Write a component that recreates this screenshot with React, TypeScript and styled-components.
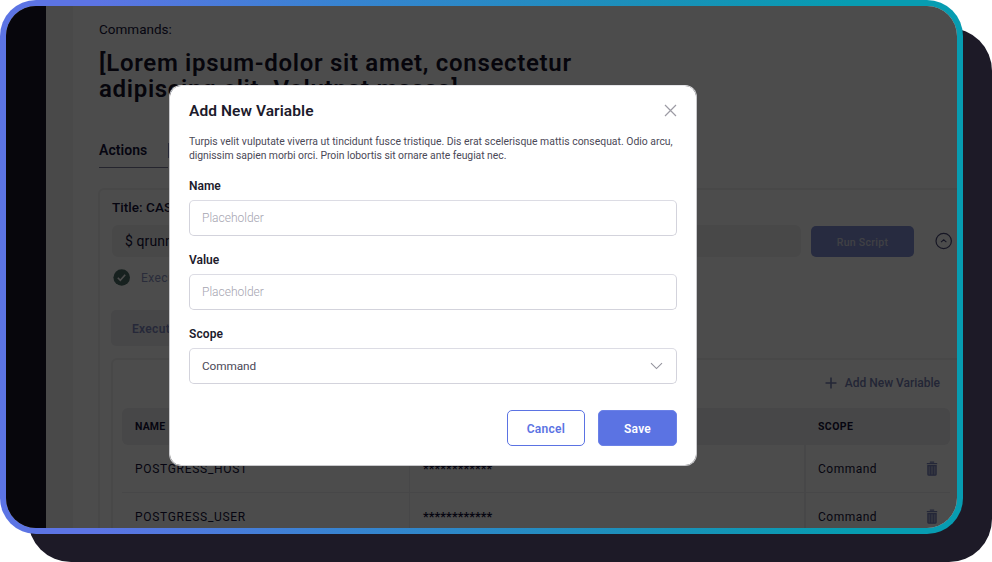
import React from 'react';
import styled, { createGlobalStyle } from 'styled-components';

const GlobalStyle = createGlobalStyle`
  * { box-sizing: border-box; }
  body { margin: 0; background: #fff; font-family: Roboto, "Liberation Sans", sans-serif; }
`;

const Stage = styled.div`
  position: relative;
  width: 992px;
  height: 562px;
  overflow: hidden;
  background: #fff;
`;

const BackPlate = styled.div`
  position: absolute;
  inset: 28px 0 0 28px;
  border-radius: 43px;
  background: #1d1a27;
`;

const Frame = styled.div`
  position: relative;
  width: 963px;
  height: 534px;
  padding: 6px;
  border-radius: 36px;
  background: linear-gradient(90deg, #5c74e4 10%, #3883d1 35%, #1b90b9 67%, #079cb1 88%);
`;

const Screen = styled.div`
  position: relative;
  display: flex;
  width: 951px;
  height: 522px;
  border-radius: 30px;
  overflow: hidden;
  background: #fff;
`;

const Sidebar = styled.div`
  flex: 0 0 40px;
  background: #18152a;
`;

const Gutter = styled.div`
  flex: 0 0 27px;
  background: #f3f3f4;
`;

const Main = styled.main`
  flex: 0 0 900px;
  padding: 13px 0 0 26px;
  color: #15133a;
`;

interface TextProps {
  $size: number;
  $weight?: number;
  $spacing?: number;
  $color?: string;
}

const Text = styled.span<TextProps>`
  font-size: ${p => p.$size}px;
  font-weight: ${p => p.$weight ?? 400};
  letter-spacing: ${p => p.$spacing ?? 0}px;
  color: ${p => p.$color ?? 'inherit'};
  white-space: nowrap;
`;

const Eyebrow = styled.div`
  height: 20px;
  line-height: 20px;
`;

const Heading = styled.h1`
  margin: 11px 0 0;
  font-size: 24px;
  line-height: 26px;
  font-weight: 600;
  letter-spacing: 0.69px;
  white-space: nowrap;
  color: #15132a;
`;

const Tabs = styled.div`
  display: flex;
  margin-top: 37px;
`;

const Tab = styled.div`
  width: 69px;
  height: 29px;
  line-height: 22px;
  border-bottom: 1px solid #7e7e9c;
`;

const TabBadge = styled.div`
  width: 18px;
  height: 15px;
  margin-top: 4px;
  background: #8087b8;
`;

const Card = styled.section`
  width: 880px;
  height: 400px;
  margin: 20px 0 0 -1px;
  padding: 9px 0 0 12px;
  border: 2px solid #f0f0f2;
  border-radius: 6px;
`;

const CardTitle = styled.div`
  height: 16px;
  line-height: 16px;
`;

const ScriptRow = styled.div`
  display: flex;
  align-items: center;
  margin-top: 10px;
`;

const ScriptField = styled.div`
  width: 689px;
  height: 32px;
  padding-left: 13px;
  line-height: 32px;
  border-radius: 6px;
  background: #f1f1f2;
`;

const RunButton = styled.div`
  width: 103px;
  height: 31px;
  margin: 1px 21px 0 10px;
  line-height: 29px;
  text-align: center;
  border-radius: 5px;
  background: #8290d5;
`;

const StatusRow = styled.div`
  display: flex;
  align-items: center;
  gap: 11px;
  height: 17px;
  margin-top: 12px;
`;

const ExecutionTab = styled.div`
  width: 120px;
  height: 36px;
  margin: 24px 0 0 -1px;
  padding-left: 21px;
  line-height: 35px;
  border-radius: 5px;
  background: #eeeef1;
`;

const Panel = styled.div`
  width: 880px;
  height: 220px;
  margin: 12px 0 0 -1px;
  padding: 13px 0 0 9px;
  border: 2px solid #f0f0f2;
  border-radius: 6px;
`;

const PanelAction = styled.div`
  display: flex;
  align-items: center;
  justify-content: flex-end;
  gap: 8px;
  width: 818px;
  height: 20px;
`;

const Table = styled.div`
  width: 828px;
  margin-top: 15px;
`;

const TableRow = styled.div<{ $head?: boolean }>`
  display: grid;
  grid-template-columns: 287px 395px 146px;
  height: ${p => (p.$head ? 37 : 48)}px;
  border-radius: ${p => (p.$head ? 6 : 0)}px;
  border-bottom: ${p => (p.$head ? 'none' : '1px solid #eeeef0')};
  background: ${p => (p.$head ? '#eeeef0' : 'transparent')};
`;

const Cell = styled.div<{ $line?: number }>`
  display: flex;
  align-items: center;
  justify-content: space-between;
  padding: 0 12px 0 ${p => 14 - (p.$line ?? 1)}px;
  border-left: ${p => p.$line ?? 0}px solid #efeff1;
`;

const Overlay = styled.div`
  position: absolute;
  inset: 0;
  background: rgba(0, 0, 0, 0.7);
`;

const Modal = styled.div`
  position: absolute;
  top: 79px;
  left: 163px;
  width: 528px;
  height: 381px;
  padding: 15px 20px 20px;
  border: 1px solid #c9c9cc;
  border-top-color: #e6e6ea;
  border-radius: 12px;
  background: #fff;
  background-clip: padding-box;
  color: #1d1b2c;
`;

const ModalHeader = styled.header`
  display: flex;
  align-items: center;
  justify-content: space-between;
  width: 488px;
  height: 19px;
  margin-left: -1px;
`;

const Description = styled.p`
  display: flex;
  flex-direction: column;
  margin: 15px 0 14px -1px;
  line-height: 14px;
`;

const Field = styled.div`
  width: 488px;
  margin: 0 0 15px -1px;
`;

const Label = styled.div`
  height: 16px;
  line-height: 16px;
`;

const Control = styled.div`
  display: flex;
  align-items: center;
  justify-content: space-between;
  height: 36px;
  margin-top: 7px;
  padding: 0 13px 0 12px;
  border: 1px solid #d3d3dc;
  border-top-color: #dcdce4;
  border-radius: 5px;
`;

const Actions = styled.footer`
  display: flex;
  justify-content: flex-end;
  gap: 13px;
  width: 488px;
  margin: 26px 0 0 -1px;
`;

const Button = styled.div<{ $primary?: boolean }>`
  width: ${p => (p.$primary ? 79 : 78)}px;
  height: 36px;
  line-height: 33px;
  text-align: center;
  border: 1px solid ${p => (p.$primary ? '#6b81e7' : '#5b73e3')};
  border-radius: 5px;
  color: ${p => (p.$primary ? '#fff' : '#5b73e3')};
  background: ${p => (p.$primary ? '#5b73e3' : '#fff')};
`;

const CheckIcon = () => (
  <svg width="18" height="17" viewBox="0 0 18 17">
    <circle cx="9.7" cy="8.5" r="8.3" fill="#4f706a" />
    <path d="M5.8 8.8l2.5 2.6 4.9-5.6" fill="none" stroke="#fff" strokeWidth="1.6" />
  </svg>
);

const CollapseIcon = () => (
  <svg width="18" height="18" viewBox="0 0 18 18" fill="none" stroke="#4a4a78">
    <circle cx="8.7" cy="9" r="7.7" strokeWidth="1.2" />
    <path d="M6 10.2l2.7-2.4 2.7 2.4" strokeWidth="1.1" />
  </svg>
);

const PlusIcon = () => (
  <svg width="12" height="12" viewBox="0 0 12 12" stroke="#7780b4" strokeWidth="1.6">
    <path d="M6 .5v11M.5 6h11" />
  </svg>
);

const TrashIcon = () => (
  <svg width="12" height="15" viewBox="0 0 12 15" fill="none" stroke="#7a83bd">
    <path d="M.8 2.6h10.4M3.8 1.2h4.4" strokeWidth="1.3" />
    <path d="M1.9 4.6v8.6q0 1 1 1h6.2q1 0 1-1V4.6z" strokeWidth="1.3" fill="#a9afd3" />
    <path d="M4.6 5v9M7.4 5v9" strokeWidth="1" />
  </svg>
);

const CloseIcon = () => (
  <svg width="13" height="13" viewBox="0 0 13 13" stroke="#9c9ba4" strokeWidth="1.2">
    <path d="M1 1l11 11M12 1L1 12" />
  </svg>
);

const ChevronIcon = () => (
  <svg width="13" height="8" viewBox="0 0 13 8" fill="none" stroke="#94939d" strokeWidth="1.1">
    <path d="M1 1.2l5.5 5.4L12 1.2" />
  </svg>
);

const variables = ['POSTGRESS_HOST', 'POSTGRESS_USER'];

export default function App() {
  return (
    <Stage>
      <GlobalStyle />
      <BackPlate />
      <Frame>
        <Screen>
          <Sidebar />
          <Gutter />
          <Main>
            <Eyebrow>
              <Text $size={13.5} $spacing={0}>Commands:</Text>
            </Eyebrow>
            <Heading>
              [Lorem ipsum-dolor sit amet, consectetur
              <br />
              adipiscing elit. Volutpat massa]
            </Heading>
            <Tabs>
              <Tab>
                <Text $size={14} $weight={600} $spacing={0.05}>Actions</Text>
              </Tab>
              <TabBadge />
            </Tabs>
            <Card>
              <CardTitle>
                <Text $size={13.5} $weight={500} $spacing={0.05}>Title: CASE</Text>
              </CardTitle>
              <ScriptRow>
                <ScriptField>
                  <Text $size={14} $spacing={0.1}>$ qrunner</Text>
                </ScriptField>
                <RunButton>
                  <Text $size={10.5} $weight={500} $spacing={0.28} $color="#d6d8e4">Run Script</Text>
                </RunButton>
                <CollapseIcon />
              </ScriptRow>
              <StatusRow>
                <CheckIcon />
                <Text $size={12} $spacing={0.45} $color="#8c93c4">Executed</Text>
              </StatusRow>
              <ExecutionTab>
                <Text $size={12} $weight={600} $spacing={0.3} $color="#8088be">Execution</Text>
              </ExecutionTab>
              <Panel>
                <PanelAction>
                  <PlusIcon />
                  <Text $size={12} $weight={500} $color="#7780b4">Add New Variable</Text>
                </PanelAction>
                <Table>
                  <TableRow $head>
                    <Cell>
                      <Text $size={10.5} $weight={700} $spacing={0.15}>NAME</Text>
                    </Cell>
                    <Cell />
                    <Cell $line={0}>
                      <Text $size={10.5} $weight={700} $spacing={0.4}>SCOPE</Text>
                    </Cell>
                  </TableRow>
                  {variables.map(name => (
                    <TableRow key={name}>
                      <Cell>
                        <Text $size={12} $spacing={0.7}>{name}</Text>
                      </Cell>
                      <Cell $line={1}>
                        <Text $size={12.5} $weight={700} $spacing={0.1}>************</Text>
                      </Cell>
                      <Cell $line={2}>
                        <Text $size={12} $spacing={0.5}>Command</Text>
                        <TrashIcon />
                      </Cell>
                    </TableRow>
                  ))}
                </Table>
              </Panel>
            </Card>
          </Main>
          <Overlay />
          <Modal>
            <ModalHeader>
              <Text $size={15.5} $weight={600} $spacing={0.08}>Add New Variable</Text>
              <CloseIcon />
            </ModalHeader>
            <Description>
              <Text $size={10.4} $spacing={0.007} $color="#4b4957">
                Turpis velit vulputate viverra ut tincidunt fusce tristique. Dis erat scelerisque mattis consequat. Odio arcu,
              </Text>
              <Text $size={10.4} $spacing={-0.045} $color="#4b4957">
                dignissim sapien morbi orci. Proin lobortis sit ornare ante feugiat nec.
              </Text>
            </Description>
            <Field>
              <Label><Text $size={12} $weight={600}>Name</Text></Label>
              <Control><Text $size={12} $weight={300} $color="#a5a4b0">Placeholder</Text></Control>
            </Field>
            <Field>
              <Label><Text $size={12} $weight={600}>Value</Text></Label>
              <Control><Text $size={12} $weight={300} $color="#a5a4b0">Placeholder</Text></Control>
            </Field>
            <Field>
              <Label><Text $size={12} $weight={600} $spacing={0.1}>Scope</Text></Label>
              <Control>
                <Text $size={11.8} $spacing={-0.1} $color="#4b4957">Command</Text>
                <ChevronIcon />
              </Control>
            </Field>
            <Actions>
              <Button><Text $size={12} $weight={600} $spacing={0.28}>Cancel</Text></Button>
              <Button $primary><Text $size={12} $weight={600} $spacing={0.25}>Save</Text></Button>
            </Actions>
          </Modal>
        </Screen>
      </Frame>
    </Stage>
  );
}
